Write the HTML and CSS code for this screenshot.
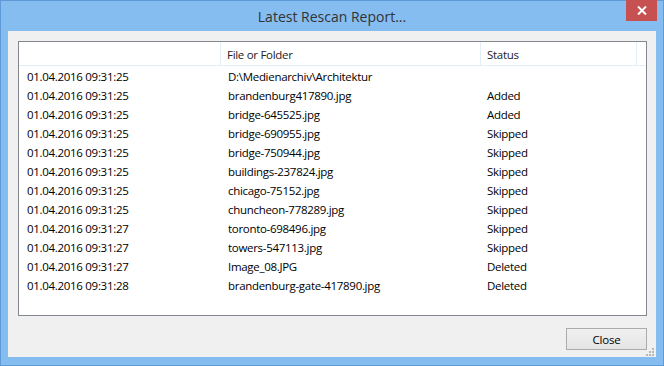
FILE: index.html
```html
<!DOCTYPE html>
<html lang="en">
<head>
    <meta charset="UTF-8">
    <title>Latest Rescan Report...</title>
    <link rel="stylesheet" href="styles.css">
</head>
<body>
    <div class="window">
        <div class="titlebar">
            <span class="title">Latest Rescan Report...</span>
            <div class="close-x">
                <svg width="10" height="9" viewBox="0 0 10 9"><path d="M1 0.5 L9 8.5 M9 0.5 L1 8.5" stroke="#fff" stroke-width="2"/></svg>
            </div>
        </div>
        <div class="client">
            <div class="listview">
                <div class="lv-header">
                    <div class="col col-time"></div>
                    <div class="col col-file">File or Folder</div>
                    <div class="col col-status">Status</div>
                    <div class="col col-rest"></div>
                </div>
                <div class="lv-body">
                    <div class="row"><span class="c-time">01.04.2016 09:31:25</span><span class="c-file">D:\Medienarchiv\Architektur</span><span class="c-status"></span></div>
                    <div class="row"><span class="c-time">01.04.2016 09:31:25</span><span class="c-file">brandenburg417890.jpg</span><span class="c-status">Added</span></div>
                    <div class="row"><span class="c-time">01.04.2016 09:31:25</span><span class="c-file">bridge-645525.jpg</span><span class="c-status">Added</span></div>
                    <div class="row"><span class="c-time">01.04.2016 09:31:25</span><span class="c-file">bridge-690955.jpg</span><span class="c-status">Skipped</span></div>
                    <div class="row"><span class="c-time">01.04.2016 09:31:25</span><span class="c-file">bridge-750944.jpg</span><span class="c-status">Skipped</span></div>
                    <div class="row"><span class="c-time">01.04.2016 09:31:25</span><span class="c-file">buildings-237824.jpg</span><span class="c-status">Skipped</span></div>
                    <div class="row"><span class="c-time">01.04.2016 09:31:25</span><span class="c-file">chicago-75152.jpg</span><span class="c-status">Skipped</span></div>
                    <div class="row"><span class="c-time">01.04.2016 09:31:25</span><span class="c-file">chuncheon-778289.jpg</span><span class="c-status">Skipped</span></div>
                    <div class="row"><span class="c-time">01.04.2016 09:31:27</span><span class="c-file">toronto-698496.jpg</span><span class="c-status">Skipped</span></div>
                    <div class="row"><span class="c-time">01.04.2016 09:31:27</span><span class="c-file">towers-547113.jpg</span><span class="c-status">Skipped</span></div>
                    <div class="row"><span class="c-time">01.04.2016 09:31:27</span><span class="c-file">Image_08.JPG</span><span class="c-status">Deleted</span></div>
                    <div class="row"><span class="c-time">01.04.2016 09:31:28</span><span class="c-file">brandenburg-gate-417890.jpg</span><span class="c-status">Deleted</span></div>
                </div>
            </div>
            <div class="footer">
                <button class="btn">Close</button>
            </div>
            <div class="grip">
                <svg width="9" height="9" viewBox="0 0 9 9" fill="#b8b8b8">
                    <rect x="6" y="0" width="2" height="2"/>
                    <rect x="3" y="3" width="2" height="2"/><rect x="6" y="3" width="2" height="2"/>
                    <rect x="0" y="6" width="2" height="2"/><rect x="3" y="6" width="2" height="2"/><rect x="6" y="6" width="2" height="2"/>
                </svg>
            </div>
        </div>
    </div>
</body>
</html>
```
FILE: styles.css
```css
html, body {
    margin: 0;
    padding: 0;
}
body {
    font-family: "Open Sans", "Noto Sans", sans-serif;
    font-size: 11.5px;
    letter-spacing: -0.3px;
    color: #000;
    background-color: #85bdf0;
}
.window {
    width: 664px;
    height: 366px;
    box-sizing: border-box;
    background-color: #85bdf0;
    border: 1px solid #5d9ad6;
    display: flex;
    flex-direction: column;
}
.titlebar {
    height: 30px;
    display: flex;
    align-items: center;
    justify-content: center;
    position: relative;
}
.title {
    font-size: 14px;
    letter-spacing: 0;
    color: #333;
}
.close-x {
    position: absolute;
    top: -1px;
    right: 6px;
    width: 31px;
    height: 21px;
    background-color: #c75050;
    display: flex;
    align-items: center;
    justify-content: center;
}
.client {
    flex: 1;
    margin: 0 7px 8px 7px;
    background-color: #f0f0f0;
    padding: 10px 9px 0 10px;
    position: relative;
    display: flex;
    flex-direction: column;
}
.listview {
    height: 275px;
    box-sizing: border-box;
    border: 1px solid #828790;
    background-color: #fff;
}
.lv-header {
    display: flex;
    height: 23px;
    border-bottom: 1px solid #e3ecf7;
}
.col {
    box-sizing: border-box;
    border-right: 1px solid #e3ecf7;
    display: flex;
    align-items: center;
    padding-left: 6px;
    padding-top: 2px;
    color: #222;
}
.col-time {
    width: 202px;
}
.col-file {
    width: 260px;
}
.col-status {
    width: 156px;
}
.col-rest {
    flex: 1;
    border-right: none;
}
.lv-body {
    padding-top: 1px;
}
.row {
    display: flex;
    height: 19px;
    align-items: center;
}
.row span {
    white-space: nowrap;
}
.c-time {
    width: 202px;
    padding-left: 8px;
    box-sizing: border-box;
}
.c-file {
    width: 260px;
    padding-left: 7px;
    box-sizing: border-box;
}
.c-status {
    padding-left: 6px;
}
.footer {
    display: flex;
    justify-content: flex-end;
    margin-top: 12px;
}
.btn {
    width: 81px;
    height: 22px;
    font-family: inherit;
    font-size: 11.5px;
    letter-spacing: -0.2px;
    color: #000;
    border: 1px solid #acacac;
    background: linear-gradient(#f0f0f0, #e5e5e5);
    padding: 0;
}
.grip {
    position: absolute;
    right: 1px;
    bottom: 0;
    line-height: 0;
}
```
